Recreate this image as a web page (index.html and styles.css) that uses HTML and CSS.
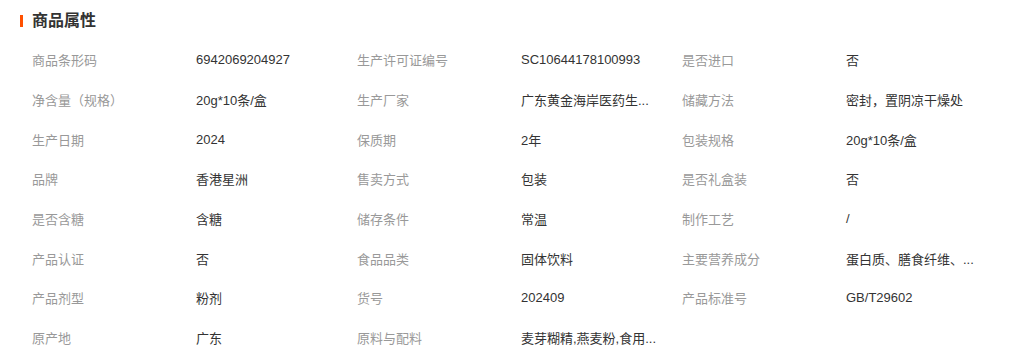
FILE: index.html
```html
<!DOCTYPE html>
<html lang="zh-CN">
<head>
<meta charset="utf-8">
<link rel="stylesheet" href="styles.css">
</head>
<body>
<div class="attrs">
  <div class="head"><span class="bar"></span><h2 class="title">商品属性</h2></div>
  <div class="grid">
    <div class="k">商品条形码</div><div class="v">6942069204927</div>
    <div class="k">生产许可证编号</div><div class="v">SC10644178100993</div>
    <div class="k">是否进口</div><div class="v">否</div>

    <div class="k">净含量（规格）</div><div class="v">20g*10条/盒</div>
    <div class="k">生产厂家</div><div class="v">广东黄金海岸医药生...</div>
    <div class="k">储藏方法</div><div class="v">密封，置阴凉干燥处</div>

    <div class="k">生产日期</div><div class="v">2024</div>
    <div class="k">保质期</div><div class="v">2年</div>
    <div class="k">包装规格</div><div class="v">20g*10条/盒</div>

    <div class="k">品牌</div><div class="v">香港星洲</div>
    <div class="k">售卖方式</div><div class="v">包装</div>
    <div class="k">是否礼盒装</div><div class="v">否</div>

    <div class="k">是否含糖</div><div class="v">含糖</div>
    <div class="k">储存条件</div><div class="v">常温</div>
    <div class="k">制作工艺</div><div class="v">/</div>

    <div class="k">产品认证</div><div class="v">否</div>
    <div class="k">食品品类</div><div class="v">固体饮料</div>
    <div class="k">主要营养成分</div><div class="v">蛋白质、膳食纤维、...</div>

    <div class="k">产品剂型</div><div class="v">粉剂</div>
    <div class="k">货号</div><div class="v">202409</div>
    <div class="k">产品标准号</div><div class="v">GB/T29602</div>

    <div class="k">原产地</div><div class="v">广东</div>
    <div class="k">原料与配料</div><div class="v">麦芽糊精,燕麦粉,食用...</div>
  </div>
</div>
</body>
</html>
```

FILE: styles.css
```css
html, body {
  margin: 0;
  padding: 0;
  background: #fff;
}
body {
  font-family: "Liberation Sans", "Noto Sans CJK SC", sans-serif;
  font-size: 13px;
  color: #333;
}
.attrs {
  padding: 11px 0 0 20px;
}
.head {
  display: flex;
  align-items: center;
  height: 20px;
}
.bar {
  width: 3px;
  height: 12px;
  background: #ff5000;
  margin-right: 9px;
}
.title {
  margin: 0;
  font-size: 16px;
  font-weight: bold;
  color: #333;
  line-height: 20px;
}
.grid {
  margin-top: 9px;
  padding-left: 12px;
  display: grid;
  grid-template-columns: 164px 161px 164px 161px 164px 161px;
  grid-auto-rows: 39.7px;
  align-items: center;
}
.k {
  color: #999;
  white-space: nowrap;
}
.v {
  color: #333;
  white-space: nowrap;
}
```
